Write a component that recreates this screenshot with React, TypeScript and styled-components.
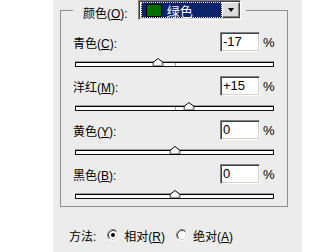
import React from 'react'
import styled, { createGlobalStyle } from 'styled-components'

const GlobalStyle = createGlobalStyle`
  html,
  body {
    margin: 0;
    padding: 0;
    background: #fff;
  }

  body {
    font-family: "Liberation Sans", "Noto Sans CJK SC", sans-serif;
    font-size: 12px;
    color: #000;
  }
`

const Page = styled.div`
  display: flex;
  width: 323px;
  height: 252px;
  overflow: hidden;
  background: #fff;
`

const Dialog = styled.div`
  display: flex;
  flex-direction: column;
  width: 249px;
  height: 252px;
  margin-left: 53px;
  padding-left: 7px;
  box-sizing: border-box;
  background: #ececec;
`

const Group = styled.fieldset`
  width: 228px;
  margin: -1px 0 0 0;
  padding: 0 13px 0 12px;
  box-sizing: border-box;
  border: 1px solid #8e8e8e;
  min-inline-size: 0;
`

const Legend = styled.legend`
  display: flex;
  align-items: center;
  gap: 10px;
  margin: 0;
  padding: 0 5px 0 10px;
`

const LegendLabel = styled.span`
  padding-top: 5px;
  white-space: nowrap;
`

const Key = styled.span`
  text-decoration: underline;
`

const Combo = styled.div`
  display: flex;
  width: 103px;
  height: 20px;
  box-sizing: border-box;
  padding: 1px 0 1px 2px;
  border: 1px solid;
  border-color: #808080 #fff #fff #808080;
  box-shadow: inset 1px 1px 0 #404040, inset -1px -1px 0 #d4d0c8;
  background: #fff;
`

const Selection = styled.div`
  display: flex;
  align-items: center;
  gap: 5px;
  width: 81px;
  padding-left: 4px;
  box-sizing: border-box;
  border: 1px dotted #f4f0c0;
  background: #0c2469;
  color: #fff;
  font-size: 13px;
`

const Swatch = styled.span<{ $color: string }>`
  width: 16px;
  height: 13px;
  box-sizing: border-box;
  border: 1px solid #000;
  background: ${({ $color }) => $color};
`

const DropButton = styled.div`
  display: flex;
  align-items: center;
  justify-content: center;
  width: 18px;
  box-sizing: border-box;
  border: 1px solid;
  border-color: #fff #404040 #404040 #fff;
  box-shadow: inset -1px -1px 0 #808080;
  background: #dcdcdc;

  &::after {
    content: '';
    border-top: 4px solid #000;
    border-left: 3.5px solid transparent;
    border-right: 3.5px solid transparent;
  }
`

const ChannelList = styled.div`
  display: flex;
  flex-direction: column;
  gap: 2px;
  padding-top: 11px;
`

const LabelRow = styled.div`
  display: flex;
  align-items: center;
  height: 20px;
`

const Label = styled.span`
  flex: 1;
  white-space: nowrap;
`

const ValueBox = styled.div`
  width: 40px;
  height: 20px;
  box-sizing: border-box;
  padding-left: 2px;
  border: 1px solid;
  border-color: #808080 #fff #fff #808080;
  box-shadow: inset 1px 1px 0 #404040, inset -1px -1px 0 #d4d0c8;
  background: #fff;
  font-size: 13px;
  line-height: 18px;
`

const Percent = styled.span`
  width: 11px;
  margin-left: 3px;
  font-size: 13px;
`

const SliderRow = styled.div`
  position: relative;
  height: 22px;
  margin-left: 2px;
  padding-top: 10px;
  box-sizing: border-box;
`

const Track = styled.div`
  position: relative;
  height: 5px;
  box-sizing: border-box;
  border: 1px solid #111;
  border-top-color: #000;
  box-shadow: 0 -1px 0 #a0a0a0;
  background: #fff;

  &::after {
    content: '';
    position: absolute;
    left: 50%;
    top: 0;
    bottom: 0;
    width: 1px;
    background: #9a9a9a;
  }
`

const Thumb = styled.svg`
  position: absolute;
  top: 6px;
  transform: translateX(-50%);
`

const MethodRow = styled.div`
  display: flex;
  align-items: center;
  height: 14px;
  margin: 21px 0 0 9px;
`

const Option = styled.label`
  display: flex;
  align-items: center;
  gap: 5px;
  margin-left: 11px;
  white-space: nowrap;
`

interface Channel {
  name: string
  key: string
  value: number
}

const channels: Channel[] = [
  { name: '青色', key: 'C', value: -17 },
  { name: '洋红', key: 'M', value: 15 },
  { name: '黄色', key: 'Y', value: 0 },
  { name: '黑色', key: 'B', value: 0 },
]

function formatValue(v: number) {
  return v > 0 ? `+${v}` : `${v}`
}

function Radio({ checked }: { checked?: boolean }) {
  return (
    <svg width="12" height="12" viewBox="0 0 12 12">
      <circle cx="6" cy="6" r="5.5" fill="#fff" stroke="#fff" />
      <path d="M2.11 9.89 A5.5 5.5 0 0 1 9.89 2.11" fill="none" stroke="#808080" />
      <path d="M2.82 9.18 A4.5 4.5 0 0 1 9.18 2.82" fill="none" stroke="#404040" />
      <path d="M9.18 2.82 A4.5 4.5 0 0 1 2.82 9.18" fill="none" stroke="#d4d0c8" />
      {checked && <circle cx="6" cy="6" r="2" fill="#000" />}
    </svg>
  )
}

function Slider({ value }: { value: number }) {
  const pct = ((value + 100) / 200) * 100
  return (
    <SliderRow>
      <Track />
      <Thumb width="11" height="9" viewBox="0 0 11 9" style={{ left: `${pct}%` }}>
        <polygon
          points="0.5,8.5 0.5,4.5 5.5,0.5 10.5,4.5 10.5,8.5"
          fill="#fff"
          stroke="#000"
        />
        <polyline points="1.5,7.5 9.5,7.5 9.5,4.9" fill="none" stroke="#9a9a9a" />
      </Thumb>
    </SliderRow>
  )
}

export default function App() {
  return (
    <Page>
      <GlobalStyle />
      <Dialog>
        <Group>
          <Legend>
            <LegendLabel>
              颜色(<Key>O</Key>):
            </LegendLabel>
            <Combo>
              <Selection>
                <Swatch $color="#006e00" />
                <span>绿色</span>
              </Selection>
              <DropButton />
            </Combo>
          </Legend>
          <ChannelList>
            {channels.map((c) => (
              <div key={c.key}>
                <LabelRow>
                  <Label>
                    {c.name}(<Key>{c.key}</Key>):
                  </Label>
                  <ValueBox>{formatValue(c.value)}</ValueBox>
                  <Percent>%</Percent>
                </LabelRow>
                <Slider value={c.value} />
              </div>
            ))}
          </ChannelList>
        </Group>
        <MethodRow>
          <span>方法:</span>
          <Option>
            <Radio checked />
            <span>
              相对(<Key>R</Key>)
            </span>
          </Option>
          <Option>
            <Radio />
            <span>
              绝对(<Key>A</Key>)
            </span>
          </Option>
        </MethodRow>
      </Dialog>
    </Page>
  )
}
